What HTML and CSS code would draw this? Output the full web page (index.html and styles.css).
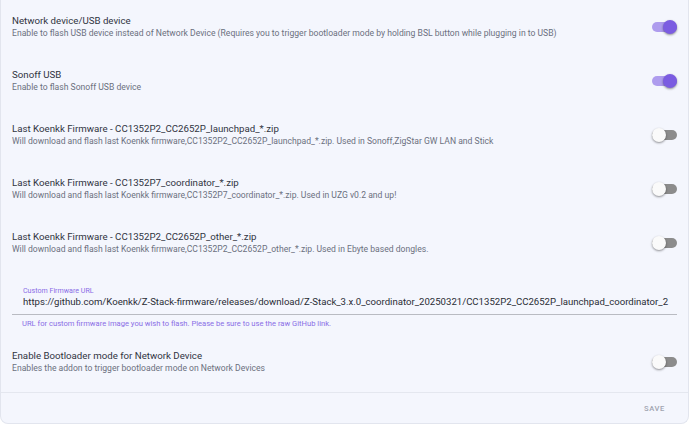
FILE: index.html
```html
<!DOCTYPE html>
<html lang="en">
<head>
    <meta charset="UTF-8">
    <meta name="viewport" content="width=device-width, initial-scale=1.0">
    <title>Flasher options</title>
    <link rel="stylesheet" href="styles.css">
</head>
<body>
    <div class="card">
        <div class="card-content">
            <div class="row">
                <div class="row-text">
                    <div class="row-title">Network device/USB device</div>
                    <div class="row-desc">Enable to flash USB device instead of Network Device (Requires you to trigger bootloader mode by holding BSL button while plugging in to USB)</div>
                </div>
                <span class="switch on"><span class="thumb"></span></span>
            </div>
            <div class="row">
                <div class="row-text">
                    <div class="row-title">Sonoff USB</div>
                    <div class="row-desc">Enable to flash Sonoff USB device</div>
                </div>
                <span class="switch on"><span class="thumb"></span></span>
            </div>
            <div class="row">
                <div class="row-text">
                    <div class="row-title">Last Koenkk Firmware - CC1352P2_CC2652P_launchpad_*.zip</div>
                    <div class="row-desc">Will download and flash last Koenkk firmware,CC1352P2_CC2652P_launchpad_*.zip. Used in Sonoff,ZigStar GW LAN and Stick</div>
                </div>
                <span class="switch"><span class="thumb"></span></span>
            </div>
            <div class="row">
                <div class="row-text">
                    <div class="row-title">Last Koenkk Firmware - CC1352P7_coordinator_*.zip</div>
                    <div class="row-desc">Will download and flash last Koenkk firmware,CC1352P7_coordinator_*.zip. Used in UZG v0.2 and up!</div>
                </div>
                <span class="switch"><span class="thumb"></span></span>
            </div>
            <div class="row">
                <div class="row-text">
                    <div class="row-title">Last Koenkk Firmware - CC1352P2_CC2652P_other_*.zip</div>
                    <div class="row-desc">Will download and flash last Koenkk firmware,CC1352P2_CC2652P_other_*.zip. Used in Ebyte based dongles.</div>
                </div>
                <span class="switch"><span class="thumb"></span></span>
            </div>

            <div class="field">
                <div class="field-box">
                    <div class="field-label">Custom Firmware URL</div>
                    <div class="field-value">https://github.com/Koenkk/Z-Stack-firmware/releases/download/Z-Stack_3.x.0_coordinator_20250321/CC1352P2_CC2652P_launchpad_coordinator_2</div>
                </div>
                <div class="field-helper">URL for custom firmware image you wish to flash. Please be sure to use the raw GitHub link.</div>
            </div>

            <div class="row">
                <div class="row-text">
                    <div class="row-title">Enable Bootloader mode for Network Device</div>
                    <div class="row-desc">Enables the addon to trigger bootloader mode on Network Devices</div>
                </div>
                <span class="switch"><span class="thumb"></span></span>
            </div>
        </div>
        <div class="card-actions">
            <button class="save">Save</button>
        </div>
    </div>
</body>
</html>
```

FILE: styles.css
```css
body {
    margin: 0;
    background: #ffffff;
    font-family: Roboto, "Noto Sans", sans-serif;
}

.card {
    width: 687px;
    background: #f4f6fd;
    border: 1px solid #e2e5ee;
    border-top: none;
    border-radius: 0 0 8px 8px;
}

.card-content {
    padding: 0 11px 3px;
}

.row {
    height: 54px;
    display: flex;
    align-items: center;
    justify-content: space-between;
}

.row-text {
    min-width: 0;
}

.row-title {
    font-size: 9.7px;
    line-height: 13px;
    color: #30343f;
    white-space: nowrap;
}

.row-desc {
    font-size: 8.6px;
    line-height: 13px;
    color: #6b707d;
    white-space: nowrap;
}

/* toggle switch */
.switch {
    position: relative;
    flex: none;
    width: 25px;
    height: 10px;
    border-radius: 5px;
    background: #8c8c8c;
}

.switch .thumb {
    position: absolute;
    top: -2px;
    left: 0;
    width: 14px;
    height: 14px;
    border-radius: 50%;
    background: #fafafa;
    box-shadow: 0 1px 2px rgba(0, 0, 0, 0.3), 0 1px 3px rgba(0, 0, 0, 0.15);
}

.switch.on {
    background: #ae9cee;
}

.switch.on .thumb {
    left: 11px;
    background: #7b5ce1;
}

/* text field */
.field {
    padding-top: 16px;
    padding-bottom: 7px;
}

.field-box {
    padding: 0 11px 5px;
    border-bottom: 1px solid #b9bbc2;
}

.field-label {
    font-size: 7.1px;
    line-height: 9px;
    color: #8a6de6;
}

.field-value {
    font-size: 9.6px;
    line-height: 14px;
    color: #2a2d35;
    white-space: nowrap;
}

.field-helper {
    margin-top: 4px;
    padding-left: 10px;
    font-size: 7.6px;
    line-height: 9px;
    color: #8a6de6;
    white-space: nowrap;
}

.card-actions {
    height: 30px;
    border-top: 1px solid #e4e7ef;
    display: flex;
    align-items: center;
    justify-content: flex-end;
    padding-right: 20px;
}

.save {
    background: none;
    border: none;
    padding: 0 3px;
    font-family: inherit;
    font-size: 7.6px;
    font-weight: 500;
    letter-spacing: 0.6px;
    text-transform: uppercase;
    color: #a0a4b0;
}
```
